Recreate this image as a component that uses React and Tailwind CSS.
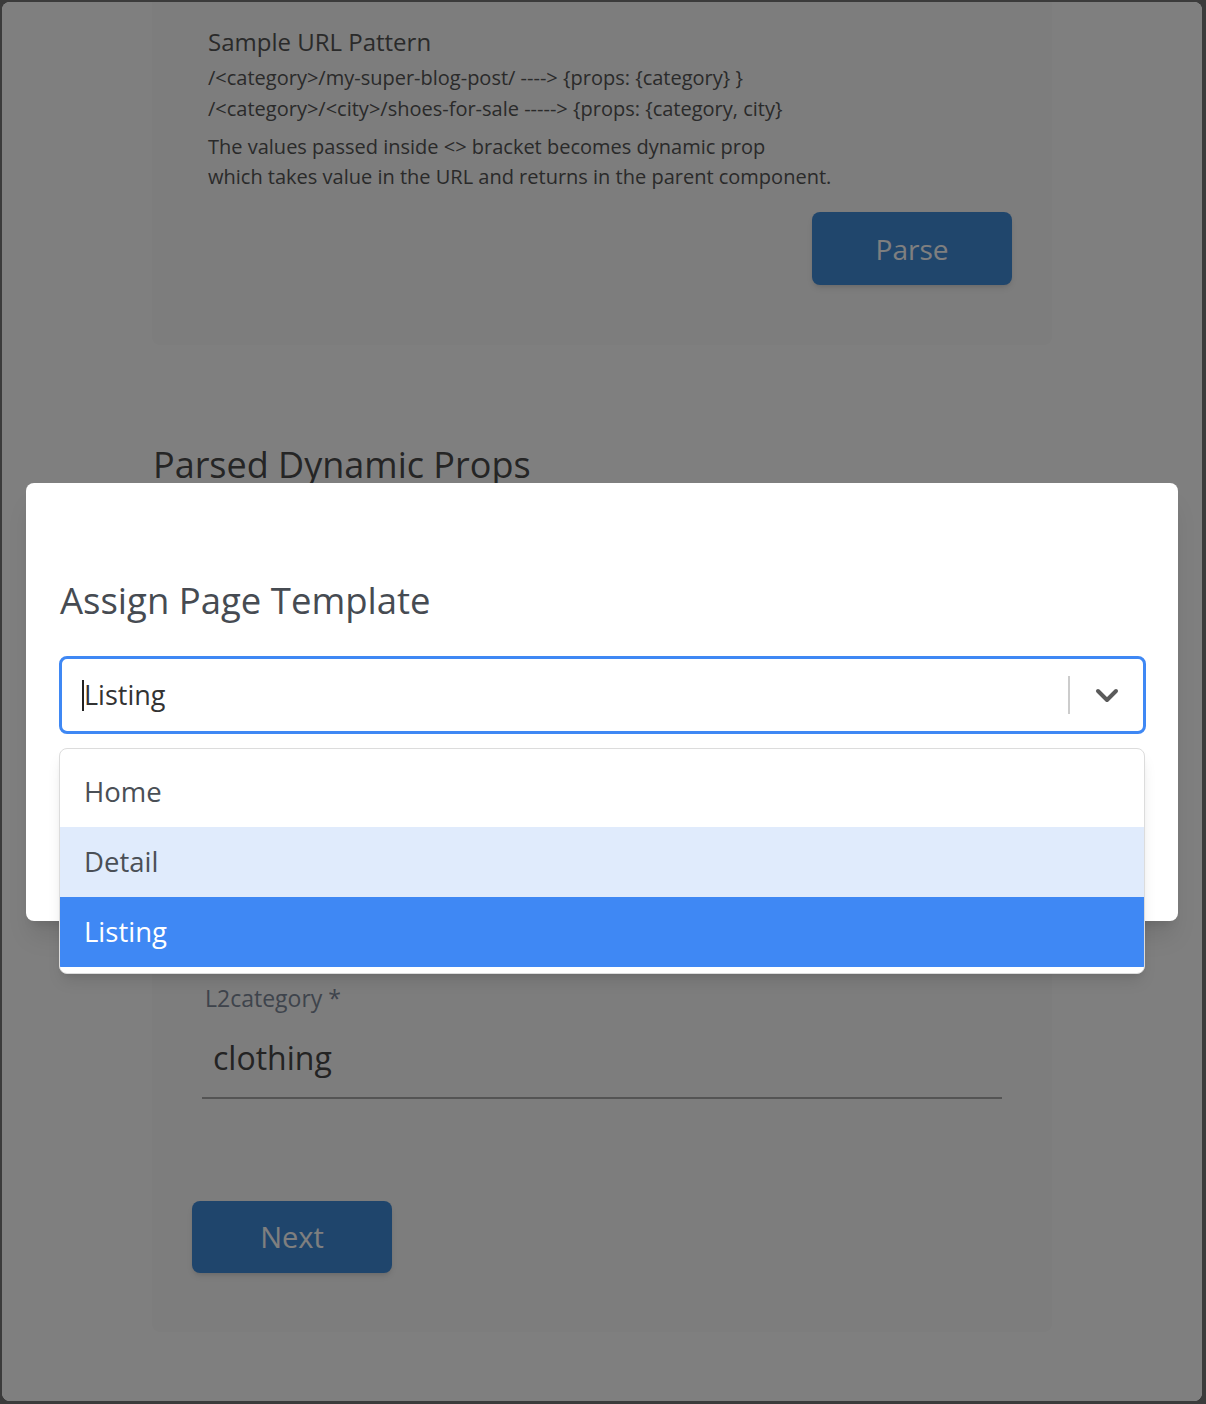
import React from 'react';

const font = { fontFamily: '"Open Sans", "Noto Sans", sans-serif' };

function Chevron() {
    return (
        <svg width="26" height="18" viewBox="0 0 26 18" fill="none">
            <polyline points="4,4 13,13 22,4" stroke="#5a5a5a" strokeWidth="4" strokeLinecap="round" strokeLinejoin="round" />
        </svg>
    );
}

export default function App() {
    const options = ['Home', 'Detail', 'Listing'];

    return (
        <div className="w-full h-[1404px] bg-[#3b3b3b] pl-[2px] pt-[2px]" style={font}>
            <div className="relative w-[1200px] h-[1399px] bg-white rounded-[8px] overflow-hidden">
                {/* Page behind the overlay */}
                <div className="ml-[150px] w-[900px]">
                    {/* URL pattern card */}
                    <div className="bg-[#fafafa] rounded-b-[8px] pt-[23px] pb-[60px] pl-[56px] pr-[40px] text-[#555]">
                        <div className="text-[24px] leading-[34px]">Sample URL Pattern</div>
                        <div className="mt-[3px] text-[20px] leading-[31px]">/&lt;category&gt;/my-super-blog-post/ ----&gt; {'{props: {category} }'}</div>
                        <div className="text-[20px] leading-[31px]">/&lt;category&gt;/&lt;city&gt;/shoes-for-sale -----&gt; {'{props: {category, city}'}</div>
                        <p className="mt-[8px] text-[20px] leading-[30px]">
                            The values passed inside &lt;&gt; bracket becomes dynamic prop
                            <br />
                            which takes value in the URL and returns in the parent component.
                        </p>
                        <div className="mt-[20px] flex justify-end">
                            <button className="w-[200px] h-[73px] rounded-[8px] bg-[#418cd9] text-white text-[28px] shadow-md">Parse</button>
                        </div>
                    </div>

                    <h2 className="mt-[98px] pl-[1px] text-[36px] leading-[44px] text-[#4a4a4a]">Parsed Dynamic Props</h2>

                    {/* Props card */}
                    <div className="mt-[20px] bg-[#fafafa] rounded-[8px] pt-[476px] pb-[59px] pl-[40px]">
                        <div className="ml-[10px] w-[800px]">
                            <label className="block pl-[3px] text-[23px] leading-[30px] text-[#7d8898]">L2category *</label>
                            <div className="mt-[23px] pl-[11px] pb-[17px] border-b-2 border-[#a9a9a9] text-[32px] leading-[44px] text-[#474747]">clothing</div>
                        </div>
                        <button className="mt-[102px] w-[200px] h-[72px] rounded-[8px] bg-[#3f8bd8] text-white text-[29px] shadow-md">Next</button>
                    </div>
                </div>

                {/* Overlay */}
                <div className="absolute inset-0 bg-black/50" />

                {/* Modal */}
                <div className="absolute left-[24px] top-[481px] w-[1152px] h-[438px] bg-white rounded-[8px] shadow-xl pt-[93px] pl-[33px] pr-[32px]">
                    <h3 className="pl-[1px] text-[36.5px] leading-[48px] text-[#464b52]">Assign Page Template</h3>

                    <div className="relative mt-[32px]">
                        <div className="h-[78px] border-[3px] border-[#3f88f4] rounded-[8px] flex items-center">
                            <div className="flex-1 flex items-center pl-[20px]">
                                <span className="w-[2px] h-[31px] bg-[#222]" />
                                <span className="text-[27px] leading-[38px] text-[#333]">Listing</span>
                            </div>
                            <span className="w-[2px] h-[38px] bg-[#cccccc]" />
                            <span className="w-[73px] flex justify-center items-center pt-[2px]">
                                <Chevron />
                            </span>
                        </div>

                        {/* Dropdown menu */}
                        <div className="absolute left-0 right-[1px] top-full mt-[14px] bg-white rounded-[8px] border border-[#dcdcdc] shadow-lg pt-[8px] pb-[6px] overflow-hidden">
                            {options.map((opt) => (
                                <div
                                    key={opt}
                                    className={`h-[70px] flex items-center pl-[24px] text-[27.5px] ${
                                        opt === 'Listing'
                                            ? 'bg-[#3f88f4] text-white'
                                            : opt === 'Detail'
                                            ? 'bg-[#e0ebfc] text-[#4a4f56]'
                                            : 'text-[#4a4f56]'
                                    }`}
                                >
                                    {opt}
                                </div>
                            ))}
                        </div>
                    </div>
                </div>
            </div>
        </div>
    );
}
